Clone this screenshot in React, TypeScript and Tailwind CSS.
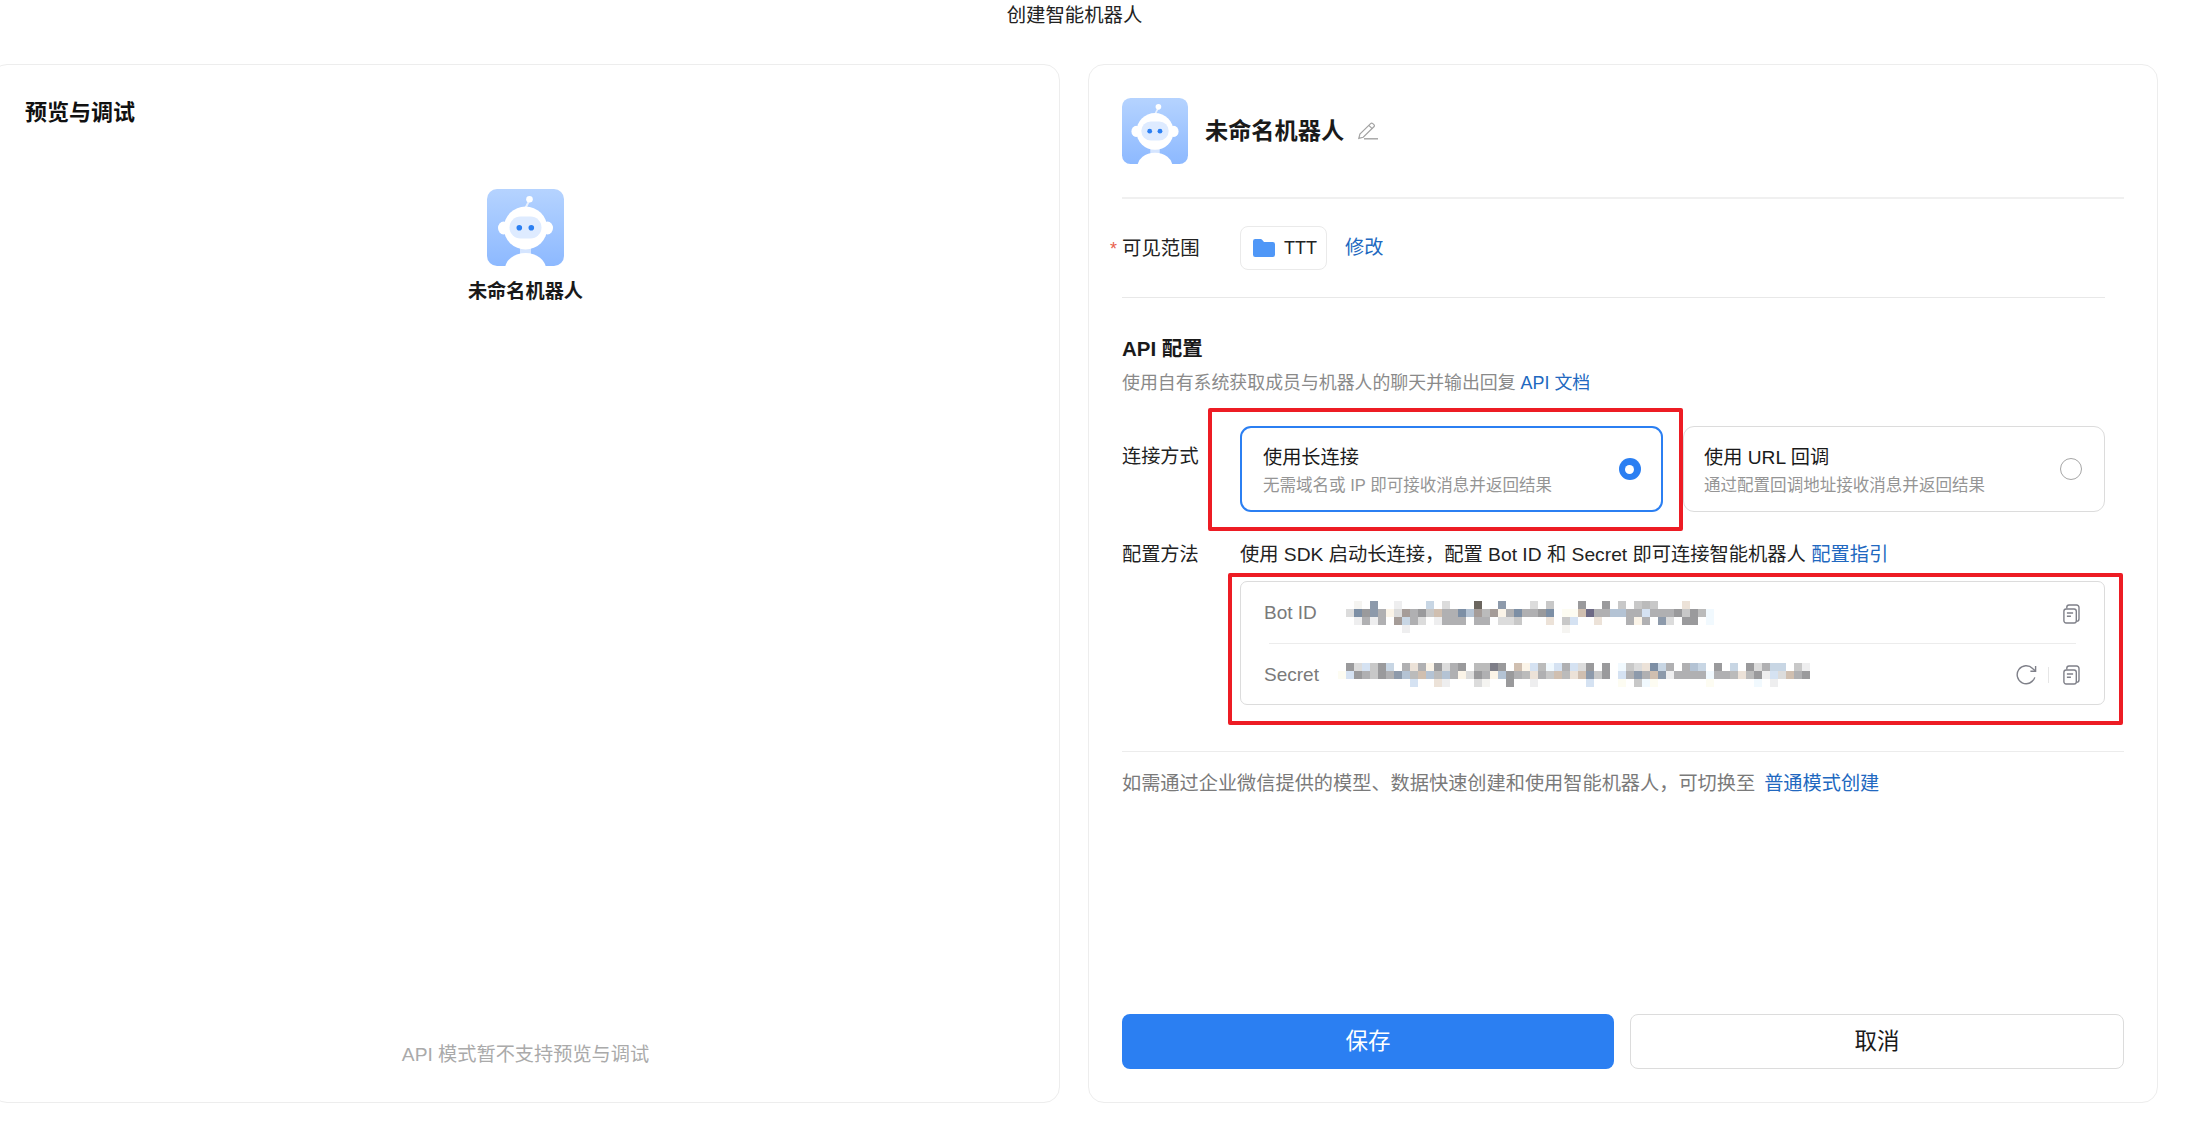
import React from "react";

const FONT = "font-['Liberation_Sans','Noto_Sans_CJK_SC',sans-serif]";

const PALETTE: Record<string, string> = {
  a: "#b0b0b2", b: "#8d9aab", c: "#dcdcdc", d: "#eeeeef", e: "#9a9a9c", f: "#6b665f",
  g: "#c8c8c8", h: "#c8d6e4", i: "#ece2d8", j: "#fbf4e8", k: "#a59c98", l: "#7d8fa5",
  m: "#bbbbbb", n: "#6d6a85", o: "#d5e2f2", p: "#f1f9fe", q: "#b4c3d4", r: "#d0bfb0",
  s: "#fdfcf2", t: "#f5f4f1", u: "#7e7e88",
};

const BOT_ROWS = [
  ".t.b..d...h.c...f..b...c.g...e..e.g.gmg...i...",
  "clebajckaegraalqkmkjalaael.ssrnaaqqaaoaaaegemp",
  ".dada.khac.daaa.aa.ccg...i.go..i...aja.bc.ee.p",
  ".......d...................t",
];

const SECRET_ROWS = [
  ".ecogeh.aiajecae.mmue.rjompoaoce.e.pgcilha.aqh.e.h.ecahh.gd",
  "soeageabqmrqmqajceajqeamiagrmirbge.oabarbdaaaapaamimedocrae",
  ".........o..id...ct..e..d......o...s.gps......s.....p.d",
];

function Mosaic({ rows }: { rows: string[] }) {
  const cols = Math.max(...rows.map((r) => r.length));
  return (
    <svg width={cols * 8} height={rows.length * 8} viewBox={`0 0 ${cols * 8} ${rows.length * 8}`} shapeRendering="crispEdges" className="shrink-0">
      {rows.map((row, y) =>
        row.split("").map((ch, x) =>
          ch === "." ? null : <rect key={`${x}-${y}`} x={x * 8} y={y * 8} width={8} height={8} fill={PALETTE[ch]} />
        )
      )}
    </svg>
  );
}

function RobotAvatar({ size, id }: { size: number; id: string }) {
  return (
    <svg width={size} height={size} viewBox="0 0 77 77" className="shrink-0">
      <defs>
        <linearGradient id={id} x1="0" y1="0" x2="0" y2="1">
          <stop offset="0" stopColor="#b5d3ff" />
          <stop offset="1" stopColor="#8db9ff" />
        </linearGradient>
        <clipPath id={`${id}-c`}>
          <rect width="77" height="77" rx="10" />
        </clipPath>
      </defs>
      <g clipPath={`url(#${id}-c)`}>
        <rect width="77" height="77" fill={`url(#${id})`} />
        <path d="M38.5 19 L41.5 13" stroke="#e8f1ff" strokeWidth="2" strokeLinecap="round" />
        <circle cx="42.5" cy="10.3" r="3.3" fill="#ffffff" />
        <rect x="33" y="58" width="11" height="8" fill="#d5e5ff" />
        <ellipse cx="16.5" cy="39" rx="5.5" ry="6.5" fill="#ffffff" />
        <ellipse cx="60.5" cy="39" rx="5.5" ry="6.5" fill="#ffffff" />
        <ellipse cx="38.5" cy="39" rx="21.7" ry="21.4" fill="#ffffff" />
        <rect x="22.5" y="27.5" width="32" height="22" rx="11" fill="#deebff" />
        <circle cx="32.3" cy="38.7" r="2.8" fill="#2b7ff2" />
        <circle cx="44.3" cy="38.7" r="2.8" fill="#2b7ff2" />
        <ellipse cx="38.5" cy="80" rx="20.5" ry="16" fill="#ffffff" />
      </g>
    </svg>
  );
}

function CopyIcon() {
  return (
    <svg width="17" height="20" viewBox="0 0 17 20" fill="none" stroke="#7f8089" strokeWidth="1.4" className="shrink-0">
      <rect x="0.9" y="5" width="12.4" height="14" rx="2.2" />
      <path d="M3.8 4.6V3.2a2.2 2.2 0 0 1 2.2-2.2h7.6a2.4 2.4 0 0 1 2.4 2.4v11.4a2.6 2.6 0 0 1-2.5 2.6" />
      <path d="M3.9 9h6.2M3.9 12.2h4" />
    </svg>
  );
}

function RefreshIcon() {
  return (
    <svg width="21" height="20" viewBox="0 0 21 20" fill="none" stroke="#7f8089" strokeWidth="1.4" className="shrink-0">
      <path d="M18.8 12.4A9 9 0 1 1 16.6 3.4L19.4 6" />
      <path d="M19.6 0.9V6.2H14.4" />
    </svg>
  );
}

function PencilIcon() {
  return (
    <svg width="20" height="18" viewBox="0 0 20 18" fill="none" stroke="#a3a3a3" strokeWidth="1.2" className="shrink-0">
      <path d="M0.8 16.4L1.9 12 12.6 1.6a1.6 1.6 0 0 1 2.2 0l1.1 1a1.6 1.6 0 0 1 0 2.2L5.2 15.3Z" />
      <path d="M10.8 3.4L14.2 6.6" />
      <path d="M6 16.8H20" strokeWidth="1.4" />
    </svg>
  );
}

function FolderIcon() {
  return (
    <svg width="22" height="18" viewBox="0 0 22 18" className="shrink-0">
      <path d="M0 2.2A2.2 2.2 0 0 1 2.2 0h5.4a2 2 0 0 1 1.5.7L11 3h8.8A2.2 2.2 0 0 1 22 5.2v10.6a2.2 2.2 0 0 1-2.2 2.2H2.2A2.2 2.2 0 0 1 0 15.8Z" fill="#4f97f7" />
    </svg>
  );
}

function ConnectCard({ title, sub, active }: { title: string; sub: string; active?: boolean }) {
  return (
    <div
      className={
        active
          ? "flex h-[86px] items-center justify-between rounded-[11px] border-[2.5px] border-[#2b7ff2] pl-[21px] pr-[20px]"
          : "flex h-[86px] items-center justify-between rounded-[11px] border-[1.5px] border-[#dcdcdc] pl-[20.5px] pr-[22px]"
      }
    >
      <div className="flex flex-col pt-[5px]">
        <span className="text-[19.2px] leading-[26px] text-[#1a1a1a]">{title}</span>
        <span className="mt-[3px] text-[16.55px] leading-[24px] text-[#959595]">{sub}</span>
      </div>
      {active ? (
        <span className="flex h-[22px] w-[22px] items-center justify-center rounded-full bg-[#2b7ff2]">
          <span className="h-[9px] w-[9px] rounded-full bg-white" />
        </span>
      ) : (
        <span className="h-[22px] w-[22px] rounded-full border-[1.5px] border-[#a6a6a6]" />
      )}
    </div>
  );
}

function CredRow({ label, rows, labelW, actions, actionsTop }: { label: string; rows: string[]; labelW: string; actions: React.ReactNode; actionsTop: string }) {
  return (
    <div className="flex items-start pl-[23px] pr-[24px]">
      <span className={`${labelW} shrink-0 text-[19px] leading-[24px] text-[#7a7a7a]`}>{label}</span>
      <Mosaic rows={rows} />
      <div className={`ml-auto flex items-center ${actionsTop}`}>{actions}</div>
    </div>
  );
}

export default function App() {
  return (
    <div className={`relative h-[1126px] w-[2201px] overflow-hidden bg-white ${FONT}`}>
      <div className="flex h-[64px] justify-center pr-[52px]">
        <h1 className="mt-[2px] text-[19.4px] font-normal leading-[26px] text-[#222222]">创建智能机器人</h1>
      </div>

      <div className="ml-[-9px] flex w-[2167px] gap-[28px]">
        <section className="flex h-[1039px] w-[1069px] flex-col rounded-[16px] border border-[#ededed] pl-[33px]">
          <h2 className="mt-[34px] text-[22px] font-bold leading-[28px] text-[#111111]">预览与调试</h2>
          <div className="mt-[62px] flex flex-col items-center pr-[33px]">
            <RobotAvatar size={77} id="av-left" />
            <span className="mt-[13px] text-[19.2px] font-bold leading-[26px] text-[#1a1a1a]">未命名机器人</span>
          </div>
          <p className="mt-auto mb-[33px] pr-[33px] text-center text-[19.2px] leading-[28px] text-[#aaaaaa]">API 模式暂不支持预览与调试</p>
        </section>

        <section className="flex h-[1039px] w-[1070px] flex-col rounded-[16px] border border-[#ededed] pl-[33px] pr-[33px]">
          <div className="mt-[33px] flex items-center border-b-2 border-[#f0f0f0] pb-[33px]">
            <RobotAvatar size={66} id="av-right" />
            <span className="ml-[17px] text-[23.2px] font-bold leading-[30px] text-[#1a1a1a]">未命名机器人</span>
            <span className="ml-[14px]"><PencilIcon /></span>
          </div>

          <div className="pr-[19px]">
            <div className="relative mt-[27px] flex items-center border-b border-[#e8e8e8] pb-[27px]">
              <span className="absolute left-[-12px] top-[11px] text-[18px] leading-[24px] text-[#e8604c]">*</span>
              <span className="w-[118px] shrink-0 text-[19.4px] leading-[26px] text-[#222222]">可见范围</span>
              <span className="flex h-[44px] items-center rounded-[8px] border border-[#eaeaea] pl-[12px] pr-[9px]">
                <FolderIcon />
                <span className="ml-[9px] text-[18px] leading-[24px] text-[#222222]">TTT</span>
              </span>
              <span className="ml-[18px] text-[19.2px] leading-[26px] text-[#2168c0]">修改</span>
            </div>

            <h3 className="mt-[37px] text-[20.5px] font-bold leading-[28px] text-[#1a1a1a]">API 配置</h3>
            <p className="mt-[7px] text-[17.9px] leading-[26px] text-[#8a8a8a]">
              使用自有系统获取成员与机器人的聊天并输出回复 <span className="text-[#2168c0]">API 文档</span>
            </p>

            <div className="mt-[30px] flex items-start">
              <span className="w-[118px] shrink-0 pt-[18px] text-[19.2px] leading-[26px] text-[#222222]">连接方式</span>
              <div className="grid flex-1 grid-cols-2 gap-[20px]">
                <ConnectCard active title="使用长连接" sub="无需域名或 IP 即可接收消息并返回结果" />
                <ConnectCard title="使用 URL 回调" sub="通过配置回调地址接收消息并返回结果" />
              </div>
            </div>

            <div className="mt-[29px] flex items-start">
              <span className="w-[118px] shrink-0 text-[19.2px] leading-[28px] text-[#222222]">配置方法</span>
              <div className="flex-1">
                <p className="text-[19.25px] leading-[28px] text-[#222222]">
                  使用 SDK 启动长连接，配置 Bot ID 和 Secret 即可连接智能机器人 <span className="text-[#2168c0]">配置指引</span>
                </p>
                <div className="mt-[12px] h-[124px] rounded-[7px] border-[1.5px] border-[#dcdcdc] pt-[19px]">
                  <CredRow label="Bot ID" rows={BOT_ROWS} labelW="w-[82px]" actionsTop="mt-[3px]" actions={<CopyIcon />} />
                  <div className="mx-[28px] mt-[10px] border-t border-[#ececec]" />
                  <div className="mt-[19px]">
                    <CredRow
                      label="Secret"
                      rows={SECRET_ROWS}
                      labelW="w-[74px]"
                      actionsTop="mt-[2px]"
                      actions={
                        <>
                          <RefreshIcon />
                          <span className="ml-[11px] mr-[14px] h-[16px] w-px bg-[#e6e6e6]" />
                          <CopyIcon />
                        </>
                      }
                    />
                  </div>
                </div>
              </div>
            </div>
          </div>

          <div className="mt-[46px] border-t border-[#ececec]" />
          <p className="mt-[18px] text-[19.2px] leading-[28px] text-[#7a7a7a]">
            如需通过企业微信提供的模型、数据快速创建和使用智能机器人，可切换至<span className="ml-[9px] text-[#2168c0]">普通模式创建</span>
          </p>

          <div className="mt-auto mb-[33px] flex gap-[16px]">
            <button className="h-[55px] w-[492px] rounded-[8px] bg-[#2b7ff2] text-[22.5px] text-white">保存</button>
            <button className="h-[55px] flex-1 rounded-[8px] border-[1.5px] border-[#dcdcdc] bg-white text-[22.5px] text-[#1a1a1a]">取消</button>
          </div>
        </section>
      </div>

      <div className="absolute left-[1208px] top-[408px] h-[123px] w-[475px] rounded-[2px] border-4 border-[#ed1c24]" />
      <div className="absolute left-[1228px] top-[573px] h-[152px] w-[895px] rounded-[2px] border-4 border-[#ed1c24]" />
    </div>
  );
}
